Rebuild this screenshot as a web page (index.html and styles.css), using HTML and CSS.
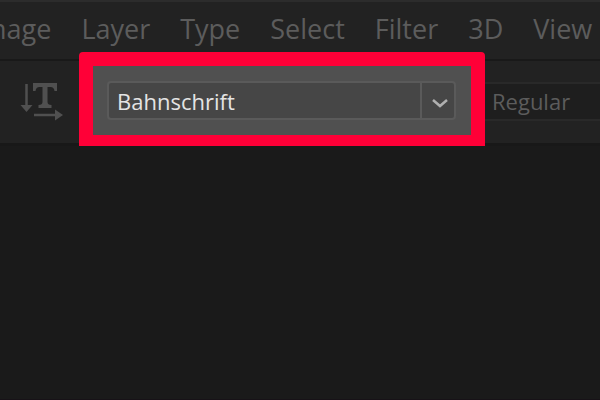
FILE: index.html
```
<!DOCTYPE html>
<html lang="en">
<head>
  <meta charset="UTF-8" />
  <meta name="viewport" content="width=device-width, initial-scale=1.0" />
  <title>Type tool options</title>
  <link rel="stylesheet" href="styles.css">
</head>
<body>

<nav class="menubar">
  <button class="menu-item">Image</button>
  <button class="menu-item">Layer</button>
  <button class="menu-item">Type</button>
  <button class="menu-item">Select</button>
  <button class="menu-item">Filter</button>
  <button class="menu-item">3D</button>
  <button class="menu-item">View</button>
</nav>

<div class="options">
  <button class="orientation" aria-label="Toggle text orientation">
    <svg width="44" height="40" viewBox="0 0 44 40">
      <path d="M6.500 3v22" fill="none" stroke="#505050" stroke-width="2.500" />
      <path d="M0.500 24h12l-6 7z" fill="#505050" />
      <path d="M13 2h24v8h-2.500q-.5-4-4-4h-3v15q0 3 4 3v3H18.500v-3q4 0 4-3V6h-3q-3.500 0-4 4H13z" fill="#505050" />
      <path d="M14 34h22" fill="none" stroke="#505050" stroke-width="2.500" />
      <path d="M35 28.500v11l8-5.500z" fill="#505050" />
    </svg>
  </button>

  <div class="highlight">
    <div class="field">
      <select class="font-select" aria-label="Font family">
        <option>Bahnschrift</option>
      </select>
      <svg class="chevron" viewBox="0 0 16 10">
        <path d="M1 1.500l7 6 7-6" fill="none" stroke="#b0b0b0" stroke-width="2.500" />
      </svg>
    </div>
  </div>

  <select class="style-select" aria-label="Font style">
    <option>Regular</option>
  </select>
</div>

<main class="canvas"></main>

</body>
</html>
```
FILE: styles.css
```
* {
  box-sizing: border-box;
}
body {
  margin: 0;
  min-height: 100vh;
  display: flex;
  flex-direction: column;
  font-family: 'Open Sans', 'Noto Sans', sans-serif;
  background: #1a1a1a;
  color: #5c5c5c;
  overflow: hidden;
}
button,
select {
  margin: 0;
  padding: 0;
  border: none;
  background: none;
  color: inherit;
  font-family: inherit;
}

/* Menu bar */
.menubar {
  display: flex;
  gap: 30px;
  height: 61px;
  margin-left: -26px;
  background: #222;
  border-top: 2px solid #2c2c2c;
  border-bottom: 2px solid #191919;
}
.menu-item {
  height: 54px;
  font-size: 27px;
  line-height: 54px;
  white-space: nowrap;
}

/* Tool options */
.options {
  display: flex;
  align-items: center;
  height: 85px;
  padding-bottom: 2px;
  background: #222;
  border-bottom: 3px solid #181818;
}
.orientation {
  display: flex;
  flex: none;
  width: 79px;
  padding-left: 20px;
}
.highlight {
  position: relative;
  flex: none;
  align-self: flex-start;
  margin-top: -9px;
  padding: 15px 15px 16px;
  width: 406px;
  height: 94px;
  background: #505050;
  border: 14px solid #ff0037;
  border-bottom-width: 11px;
  border-radius: 4px 4px 0 0;
}
.field {
  display: flex;
  position: relative;
  width: 349px;
  height: 39px;
  margin-left: -1px;
  border: 2px solid #5a5a5a;
  border-radius: 4px;
  background: #464646;
}
.font-select {
  appearance: none;
  flex: 1;
  padding-left: 8px;
  color: #e4e4e4;
  font-size: 22px;
}
.chevron {
  position: absolute;
  right: 0;
  top: 0;
  width: 34px;
  height: 35px;
  padding: 6px 6px 0 10px;
  border-left: 2px solid #5a5a5a;
}
.style-select {
  appearance: none;
  flex: 1;
  height: 39px;
  padding-left: 7px;
  background: #1e1e1e;
  border-top: 2px solid #292929;
  border-bottom: 2px solid #292929;
  font-size: 22px;
}

/* Document area */
.canvas {
  flex: 1;
  border-bottom: 1px solid #171217;
}
```
